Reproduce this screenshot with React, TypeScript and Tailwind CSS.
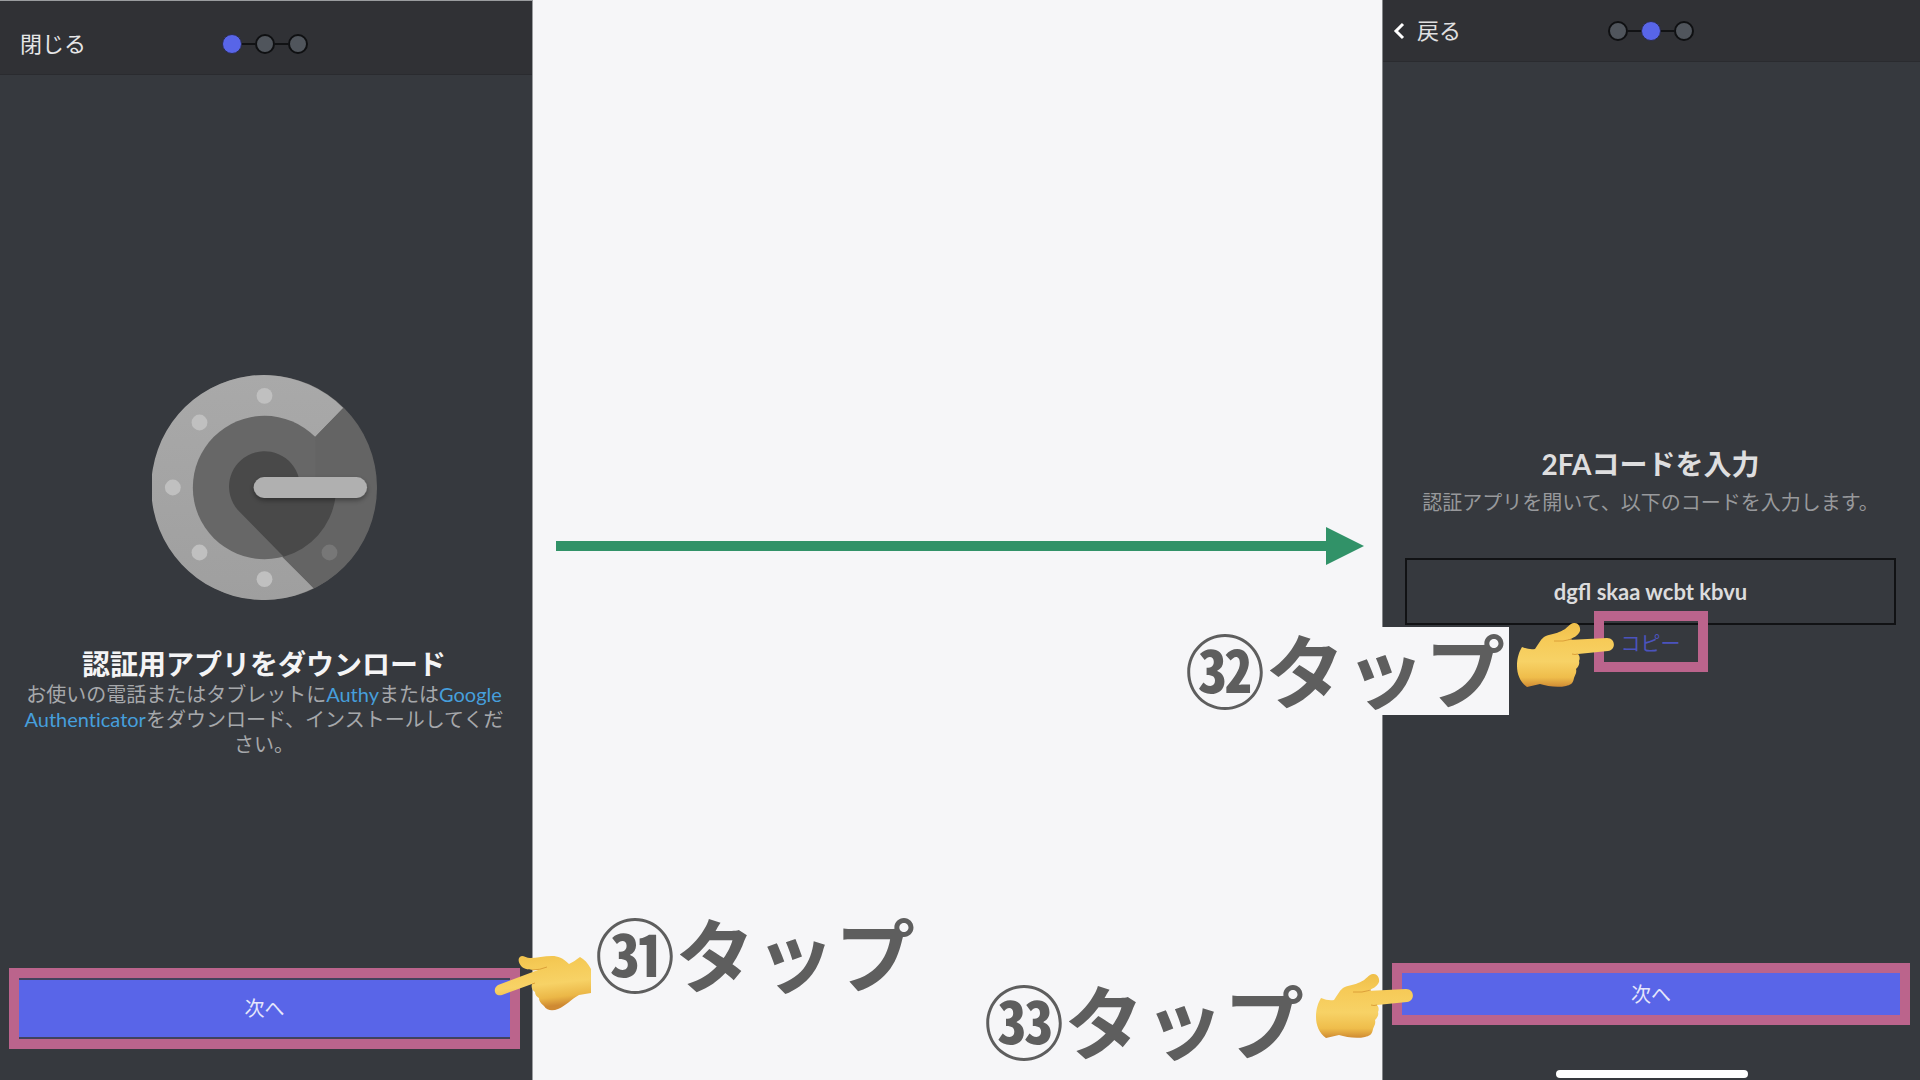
import {useId} from 'react'

interface StepsProps {
  activo: number;
}

interface TapLabelProps {
  numero: string;
}

interface HandProps {
  className?: string;
}

function Steps({ activo }: StepsProps) {
    return (
        <ol className="flex items-center">
            {[0, 1, 2].map((paso) => (
                <li key={paso} className="flex items-center">
                    {paso > 0 && <span className="w-[13px] h-[2px] bg-[#111214]" />}
                    <span className={paso === activo
                        ? 'w-5 h-5 rounded-full border border-[#2b2c4d] bg-[#5865e8]'
                        : 'w-5 h-5 rounded-full border-2 border-[#0f1012] bg-[#50555c]'}
                    />
                </li>
            ))}
        </ol>
    )
}

function AuthenticatorLogo() {
    return (
        <svg viewBox="0 0 270 270" className="w-[225px] h-[225px]" aria-hidden="true">
            <defs>
                <linearGradient id="ring" x1="0" y1="0" x2="0" y2="1">
                    <stop offset="0" stopColor="#a9a9a9" />
                    <stop offset="1" stopColor="#9f9f9f" />
                </linearGradient>
                <filter id="needle" x="-10%" y="-50%" width="120%" height="220%">
                    <feDropShadow dx="0" dy="3" stdDeviation="3" floodOpacity="0.35" />
                </filter>
            </defs>
            <circle cx="135" cy="135" r="135" fill="#646464" />
            <path d="M229.500 39.500 A135 135 0 1 0 194 256 L135 197 L135 135 L196 74 Z" fill="url(#ring)" />
            <circle cx="135" cy="135" r="86" fill="#676767" />
            <path d="M196 74 L229.500 39.500 A135 135 0 0 1 194 256 L158 218 L196 135 Z" fill="#646464" />
            <path d="M103 162 A42.500 42.500 0 1 1 176 123 L220 148 A86 86 0 0 1 158 218 Z" fill="#494949" />
            <g fill="#c0c0c0">
                <circle cx="135" cy="25" r="9.500" />
                <circle cx="57" cy="57" r="9.500" />
                <circle cx="25" cy="135" r="9.500" />
                <circle cx="57" cy="213" r="9.500" />
                <circle cx="135" cy="245" r="9.500" />
            </g>
            <circle cx="213" cy="213" r="9.500" fill="#777777" />
            <rect x="122" y="122.500" width="136" height="25" rx="12.500" fill="#b0b0b0" filter="url(#needle)" />
        </svg>
    )
}

function HandRight({ className }: HandProps) {
    const id = useId()
    return (
        <svg viewBox="0 0 97 65" className={className} aria-hidden="true">
            <defs>
                <linearGradient id={id} x1="0" y1="0" x2="0" y2="1">
                    <stop offset="0" stopColor="#efbf4a" />
                    <stop offset="0.250" stopColor="#f6ca57" />
                    <stop offset="0.600" stopColor="#f7d266" />
                    <stop offset="0.850" stopColor="#efbd4b" />
                    <stop offset="1" stopColor="#cf8a33" />
                </linearGradient>
            </defs>
            <path
                d="M5 24 Q12 27 18 26 C21 22 23 17 27 14 C32 11 38 11 42 9 C48 7 50 4 54 1 C59 -2 64 2 63 8 C61 13 56 15 51 17 L90 15 C99 15 99 27 91 28 L61 31 C63 33 63 36 62 38 C63 41 61 44 59 46 C60 50 58 52 57 55 C56 61 53 62 49 63 C40 65 30 63 23 61 L10 64 C3 59 0 51 0 43 C0 35 2 29 5 24 Z"
                fill={`url(#${id})`}
            />
            <path d="M37 18 Q46 19 55 16 M61 31 Q58 32 55 31" fill="none" stroke="#dca039" strokeWidth="1" />
        </svg>
    )
}

function HandLeft({ className }: HandProps) {
    const id = useId()
    return (
        <svg viewBox="0 0 97 55" className={className} aria-hidden="true">
            <defs>
                <linearGradient id={id} x1="0" y1="0" x2="0.200" y2="1">
                    <stop offset="0" stopColor="#f0c14b" />
                    <stop offset="0.250" stopColor="#f5ca56" />
                    <stop offset="0.600" stopColor="#f7d266" />
                    <stop offset="0.850" stopColor="#ebb747" />
                    <stop offset="1" stopColor="#cf8a33" />
                </linearGradient>
            </defs>
            <path
                d="M44 14 L4 29 C-2 33 1 41 8 39 L38 28 C37 31 38 34 41 36 C41 39 43 41 45 42 C45 46 48 48 50 50 C53 55 59 55 64 53 C72 50 77 43 85 39 L97 37 L97 13 C94 7 90 3 86 1 C82 4 79 6 75 8 C69 2 64 0 58 0 C50 0 43 2 36 2 C33 2 30 0 28 0 C23 1 24 7 28 11 C32 14 38 14 44 14 Z"
                fill={`url(#${id})`}
            />
            <path d="M38 14 Q46 14 53 11 M38 28 L41 27" fill="none" stroke="#dca039" strokeWidth="1" />
        </svg>
    )
}

function TapLabel({ numero }: TapLabelProps) {
    return (
        <p className="text-[80px] leading-[88px] font-bold text-[#5e5e5e] whitespace-nowrap">{numero}タップ</p>
    )
}

export default function App() {
    return (
        <div className="relative flex min-h-screen bg-[#f6f6f8] overflow-hidden font-[Lato,'Noto_Sans_CJK_JP',sans-serif]">
            {/* Download screen */}
            <section className="flex flex-col w-[533px] shrink-0 bg-[#36393e] border-t border-r border-[#9a9c9f]">
                <header className="grid grid-cols-[1fr_auto_1fr] items-center h-[74px] pl-5 pr-[22px] pt-3 bg-[#303135] border-b border-[#2a2b2f]">
                    <button type="button" className="justify-self-start text-[22px] leading-8 text-[#e6e6e7]">閉じる</button>
                    <Steps activo={0} />
                </header>
                <div className="flex-1 flex flex-col items-center pt-[300px] px-6 pr-7">
                    <AuthenticatorLogo />
                    <h1 className="mt-11 text-[28px] leading-10 font-bold text-[#f4f4f5]">認証用アプリをダウンロード</h1>
                    <p className="-mt-[2px] w-[480px] text-center text-xl leading-[25px] text-[#a6a8ab] [font-variant-ligatures:none]">
                        お使いの電話またはタブレットに<a href="#authy" className="text-[#469fdc]">Authy</a>または<a href="#google" className="text-[#469fdc]">Google Authenticator</a>をダウンロード、インストールしてください。
                    </p>
                </div>
                <div className="mb-[31px] ml-[9px] mr-3 border-10 border-[#bb648c] bg-[#41435c] py-[2px]">
                    <button type="button" className="block w-full h-[57px] pb-[2px] bg-[#5965e8] text-xl text-[#e6e7fb]">次へ</button>
                </div>
            </section>

            {/* Arrow between both screens */}
            <main className="flex-1 flex items-center pl-[23px] pr-[18px]">
                <svg viewBox="0 0 808 38" className="w-full mt-3" aria-hidden="true">
                    <path d="M0 14 H770 V0 L808 19 L770 38 V24 H0 Z" fill="#319268" />
                </svg>
            </main>

            {/* Code screen */}
            <section className="flex flex-col w-[538px] shrink-0 bg-[#36393e] border-l border-[#85878a]">
                <header className="grid grid-cols-[1fr_auto_1fr] items-center h-[62px] pl-[10px] pr-3 bg-[#303135] border-b border-[#2a2b2f]">
                    <button type="button" className="flex items-center gap-3 justify-self-start text-[22px] leading-8 text-[#e0e0e1]">
                        <svg viewBox="0 0 12 18" className="w-3 h-[18px]" aria-hidden="true">
                            <path d="M10 2 L3 9 L10 16" fill="none" stroke="#ffffff" strokeWidth="3" />
                        </svg>
                        戻る
                    </button>
                    <Steps activo={1} />
                </header>
                <div className="flex-1 flex flex-col items-center pt-[382px] pl-[22px] pr-6">
                    <h1 className="text-[28px] leading-10 font-bold text-[#dededf]">2FAコードを入力</h1>
                    <p className="mt-[2px] text-xl leading-8 text-[#98999c] whitespace-nowrap">認証アプリを開いて、以下のコードを入力します。</p>
                    <div className="mt-10 w-full h-[67px] flex items-center justify-center border-2 border-[#111214] text-[22px] font-bold text-[#dcdcdd]">
                        dgfl skaa wcbt kbvu
                    </div>
                    <div className="relative -mt-[14px] border-10 border-[#bb648c]">
                        <button type="button" className="block w-[94px] h-[41px] pt-[2px] text-xl leading-8 text-[#4b53bd]">コピー</button>
                    </div>
                </div>
                <div className="mb-[45px] ml-[9px] mr-[10px] border-10 border-[#bb648c]">
                    <button type="button" className="block w-full h-[42px] bg-[#5965e8] text-xl text-[#e6e7fb]">次へ</button>
                </div>
                <div className="mb-[2px] self-center w-[192px] h-2 rounded-full bg-white" />
            </section>

            {/* Annotations over the screens */}
            <div className="absolute left-[494px] bottom-[81px] flex items-end gap-1">
                <HandLeft className="w-[97px] h-[55px] -mb-3" />
                <TapLabel numero="㉛" />
            </div>
            <div className="absolute right-[306px] top-[627px] flex items-start gap-2">
                <div className="bg-[#f6f6f8] pr-1">
                    <TapLabel numero="㉜" />
                </div>
                <HandRight className="w-[97px] h-[65px] -mt-1" />
            </div>
            <div className="absolute right-[507px] bottom-[14px] flex items-start gap-3">
                <TapLabel numero="㉝" />
                <HandRight className="w-[97px] h-[65px] -mt-1" />
            </div>
        </div>
    )
}
